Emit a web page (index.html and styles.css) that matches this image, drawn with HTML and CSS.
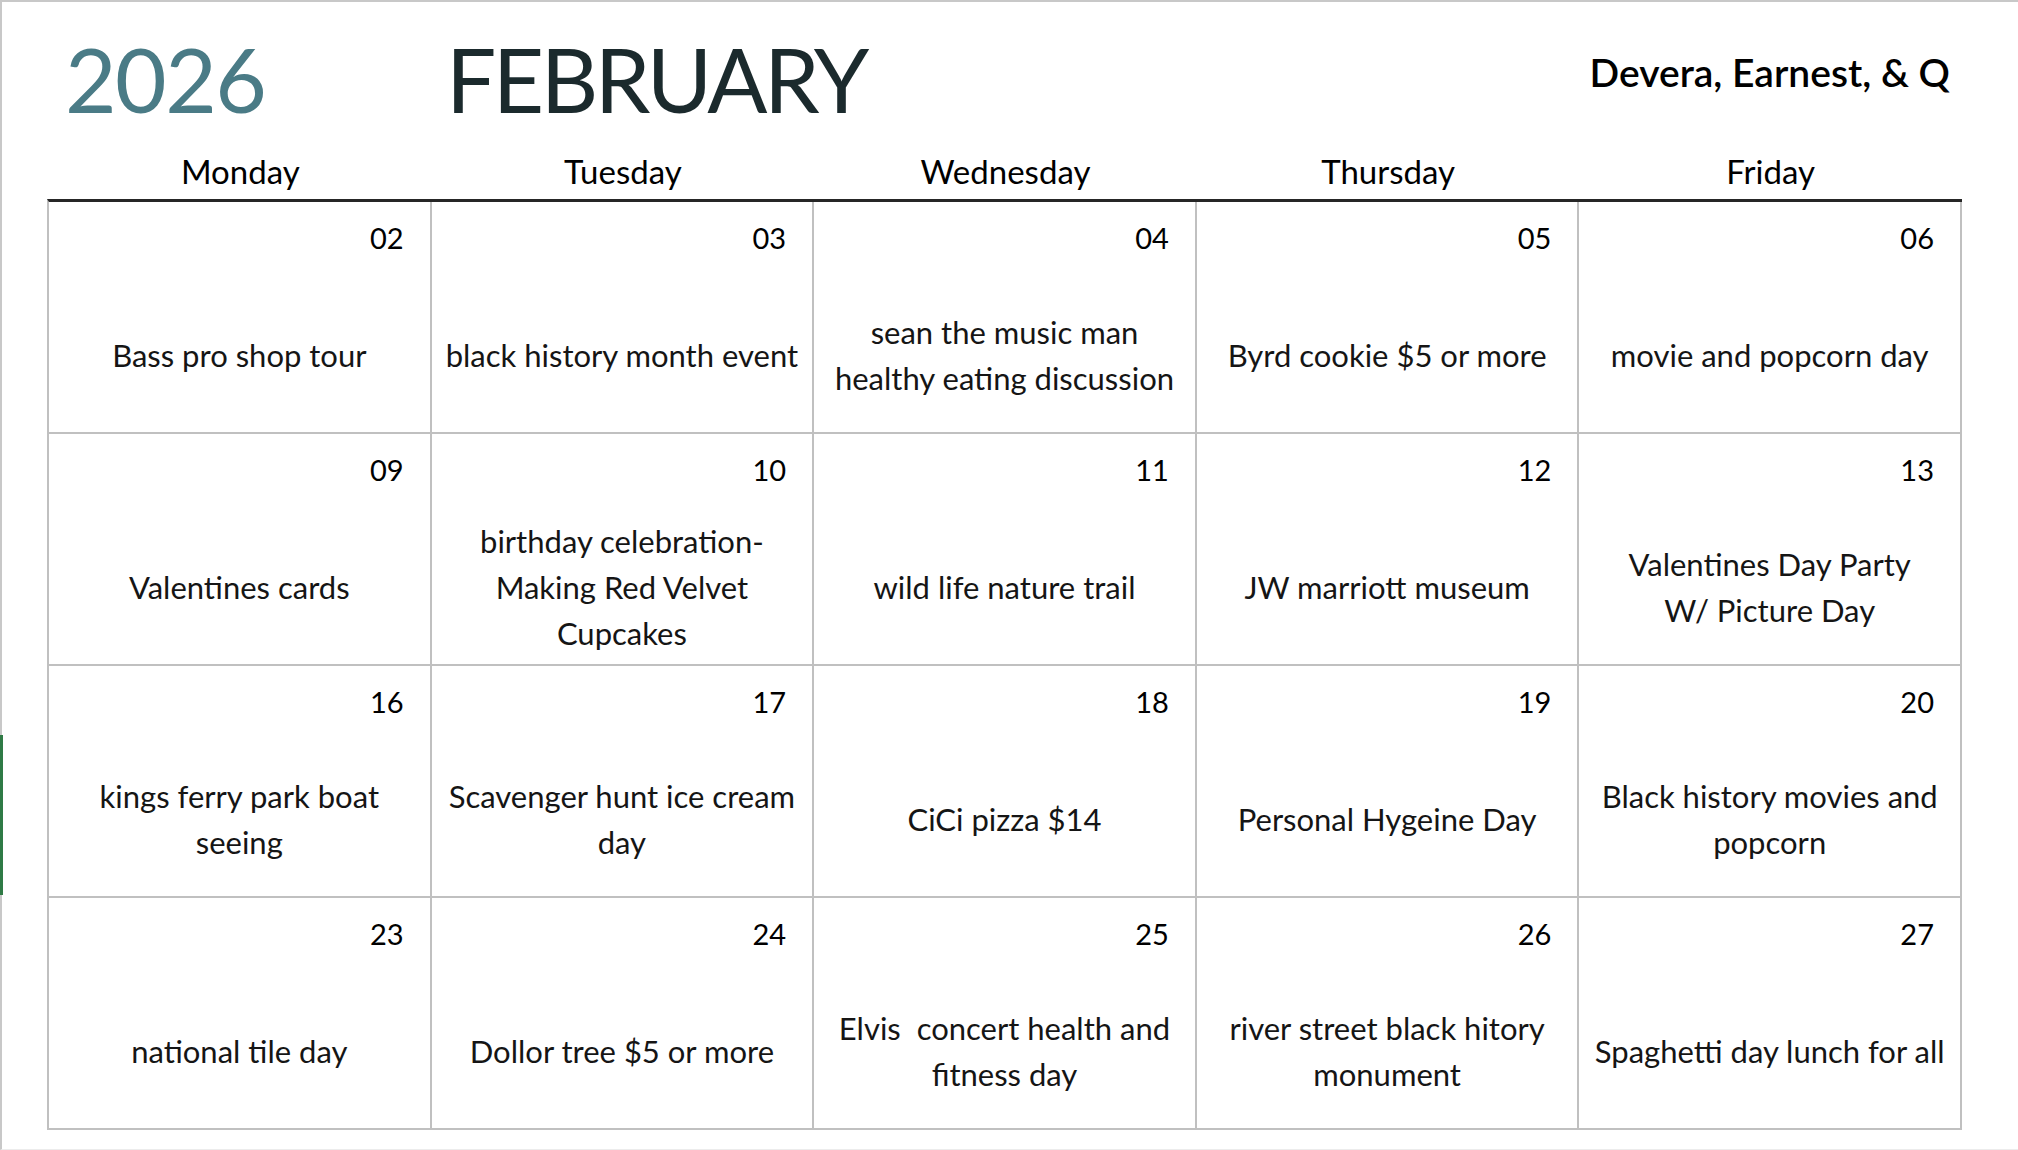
FILE: index.html
```html
<!DOCTYPE html>
<html lang="en">
<head>
<meta charset="utf-8">
<title>February 2026</title>
<link rel="stylesheet" href="styles.css">
</head>
<body>
<div class="page">
  <span class="sel-bar"></span>
  <header class="top">
    <div class="year">2026</div>
    <div class="month">FEBRUARY</div>
    <div class="names">Devera, Earnest, &amp; Q</div>
  </header>
  <div class="days">
    <div class="day">Monday</div>
    <div class="day">Tuesday</div>
    <div class="day">Wednesday</div>
    <div class="day">Thursday</div>
    <div class="day">Friday</div>
  </div>
  <div class="grid">
    <div class="cell"><div class="date">02</div><div class="event"><p>Bass pro shop tour</p></div></div>
    <div class="cell"><div class="date">03</div><div class="event"><p>black history month event</p></div></div>
    <div class="cell"><div class="date">04</div><div class="event"><p>sean the music man<br>healthy eating discussion</p></div></div>
    <div class="cell"><div class="date">05</div><div class="event"><p>Byrd cookie $5 or more</p></div></div>
    <div class="cell"><div class="date">06</div><div class="event"><p>movie and popcorn day</p></div></div>

    <div class="cell"><div class="date">09</div><div class="event"><p>Valentines cards</p></div></div>
    <div class="cell"><div class="date">10</div><div class="event"><p>birthday celebration-<br>Making Red Velvet<br>Cupcakes</p></div></div>
    <div class="cell"><div class="date">11</div><div class="event"><p>wild life nature trail</p></div></div>
    <div class="cell"><div class="date">12</div><div class="event"><p>JW marriott museum</p></div></div>
    <div class="cell"><div class="date">13</div><div class="event"><p>Valentines Day Party<br>W/ Picture Day</p></div></div>

    <div class="cell"><div class="date">16</div><div class="event"><p>kings ferry park boat<br>seeing</p></div></div>
    <div class="cell"><div class="date">17</div><div class="event"><p>Scavenger hunt ice cream<br>day</p></div></div>
    <div class="cell"><div class="date">18</div><div class="event"><p>CiCi pizza $14</p></div></div>
    <div class="cell"><div class="date">19</div><div class="event"><p>Personal Hygeine Day</p></div></div>
    <div class="cell"><div class="date">20</div><div class="event"><p>Black history movies and<br>popcorn</p></div></div>

    <div class="cell"><div class="date">23</div><div class="event"><p>national tile day</p></div></div>
    <div class="cell"><div class="date">24</div><div class="event"><p>Dollor tree $5 or more</p></div></div>
    <div class="cell"><div class="date">25</div><div class="event"><p>Elvis&nbsp; concert health and<br>fitness day</p></div></div>
    <div class="cell"><div class="date">26</div><div class="event"><p>river street black hitory<br>monument</p></div></div>
    <div class="cell"><div class="date">27</div><div class="event"><p>Spaghetti day lunch for all</p></div></div>
  </div>
</div>
</body>
</html>
```

FILE: styles.css
```css
* { box-sizing: border-box; }

html, body {
  margin: 0;
  padding: 0;
  background: #ffffff;
}

body {
  width: 2018px;
  height: 1150px;
  overflow: hidden;
  font-family: Lato, "Open Sans", "Liberation Sans", sans-serif;
  color: #111111;
}

.page {
  position: relative;
  width: 2018px;
  height: 1150px;
  border-top: 2px solid #c8c8c8;
  border-left: 2px solid #c8c8c8;
  border-bottom: 1px solid #ececec;
  padding-left: 45px;
}

.sel-bar {
  position: absolute;
  left: -2px;
  top: 733px;
  width: 3px;
  height: 160px;
  background: #2f7a46;
}

.top {
  display: flex;
  align-items: flex-start;
  height: 149px;
  width: 1915px;
}

.year {
  margin-top: 27px;
  margin-left: 18px;
  width: 381px;
  font-size: 89px;
  line-height: 100px;
  letter-spacing: -1.5px;
  color: #4a7b86;
}

.month {
  margin-top: 27px;
  font-size: 89px;
  line-height: 100px;
  letter-spacing: -3.5px;
  color: #1b2a2d;
}

.names {
  margin-left: auto;
  margin-right: 12px;
  margin-top: 45px;
  font-size: 39px;
  font-weight: 600;
  line-height: 50px;
  color: #000000;
}

.days {
  display: grid;
  grid-template-columns: repeat(5, 1fr);
  width: 1915px;
  height: 48px;
  padding-left: 2px;
}

.day {
  text-align: center;
  font-size: 33px;
  line-height: 40px;
  color: #000000;
}

.grid {
  display: grid;
  grid-template-columns: repeat(5, 1fr);
  grid-auto-rows: 232px;
  width: 1915px;
  border-top: 3px solid #262626;
  border-left: 2px solid #c0c0c0;
}

.cell {
  display: flex;
  flex-direction: column;
  border-right: 2px solid #c0c0c0;
  border-bottom: 2px solid #c0c0c0;
}

.date {
  height: 76px;
  padding: 13px 26px 0 0;
  text-align: right;
  font-size: 29px;
  line-height: 46px;
  color: #000000;
}

.event {
  flex: 1;
  display: flex;
  align-items: center;
  justify-content: center;
  text-align: center;
}

.event p {
  margin: 0;
  font-size: 31px;
  line-height: 46px;
  white-space: nowrap;
  color: #151515;
}
```
